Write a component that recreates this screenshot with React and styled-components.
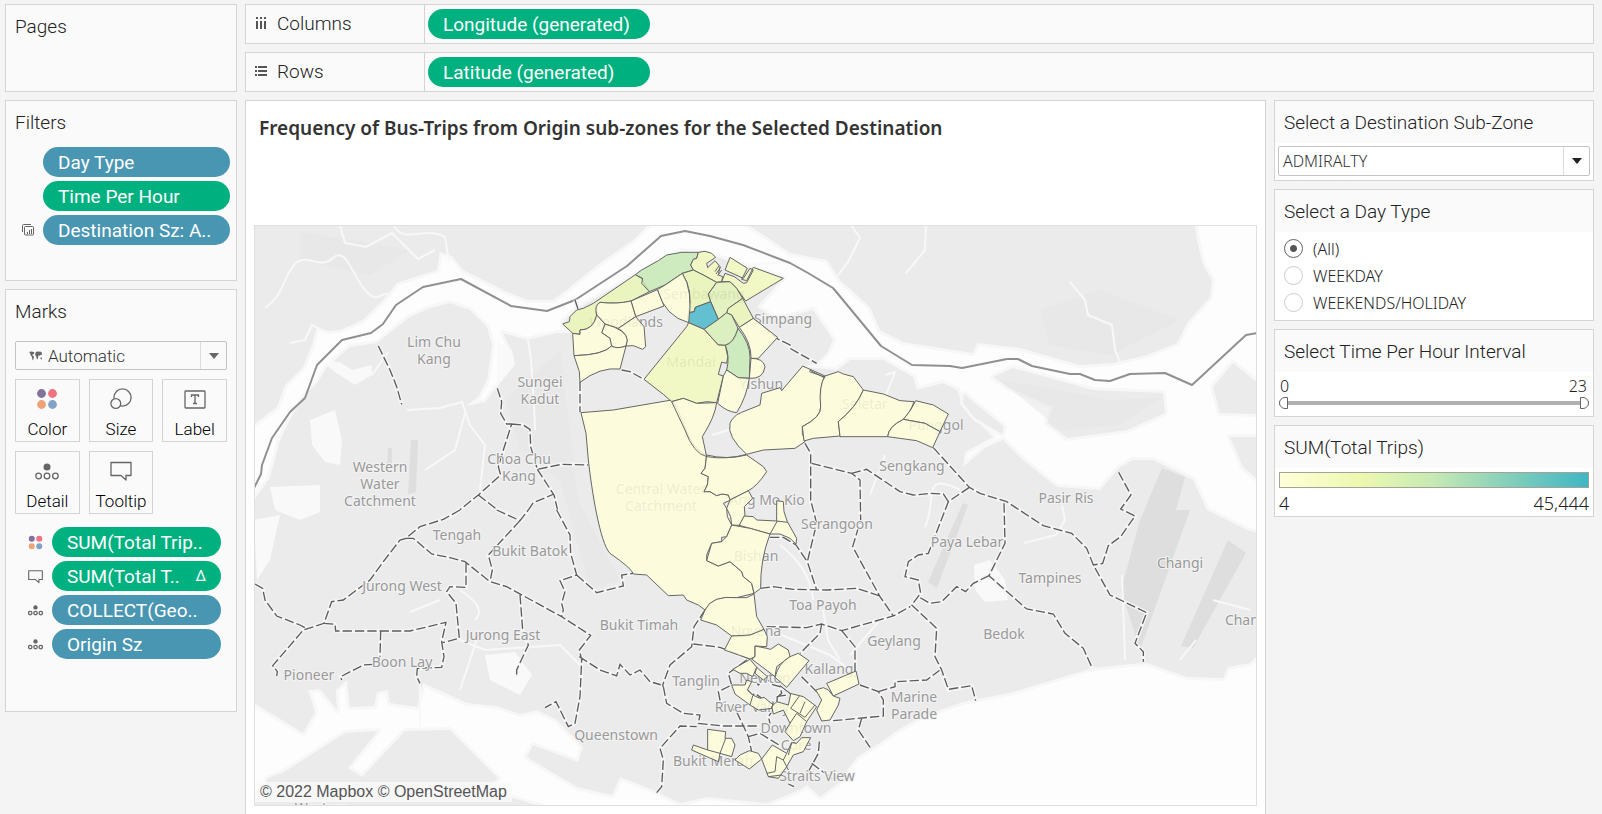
import React, { useState } from "react";
import styled, { createGlobalStyle } from "styled-components";

const GREEN = "#00b180";
const BLUE = "#4996b2";
const LINE = "#d4d4d4";

const GlobalStyle = createGlobalStyle`
  *, *::before, *::after { box-sizing: border-box; }
  body {
    margin: 0;
    background: #f4f4f4;
    color: #333;
    font-family: Roboto, "Liberation Sans", sans-serif;
  }
`;

/* ---------- page frame ---------- */

const Page = styled.div`
  display: grid;
  grid-template-columns: 232px minmax(0, 1fr);
  gap: 8px;
  min-height: 100vh;
  padding: 4px 8px 0 5px;
`;

const SideColumn = styled.aside`
  display: flex;
  flex-direction: column;
  gap: 8px;
`;

const MainColumn = styled.main`
  display: flex;
  flex-direction: column;
  gap: 8px;
  min-width: 0;
`;

const Workspace = styled.div`
  flex: 1;
  display: grid;
  grid-template-columns: minmax(0, 1fr) 320px;
  gap: 8px;
`;

const Card = styled.section`
  background: #fafafa;
  border: 1px solid ${LINE};
  min-height: ${(p) => p.$min || 0}px;
`;

const CardTitle = styled.h2`
  display: block;
  margin: 0;
  padding: 10px 9px 8px;
  font-size: 19px;
  line-height: 24px;
  font-weight: 300;
  color: #222;
`;

/* ---------- shelves and pills ---------- */

const Shelf = styled.section`
  display: flex;
  height: 40px;
  border: 1px solid ${LINE};
  background: #fafafa;
`;

const ShelfName = styled.h2`
  display: flex;
  align-items: center;
  gap: 9px;
  width: 179px;
  margin: 0;
  padding-left: 9px;
  border-right: 1px solid ${LINE};
  font-size: 19px;
  line-height: 24px;
  font-weight: 300;
  color: #222;
`;

const ShelfBody = styled.div`
  flex: 1;
  display: flex;
  align-items: center;
  padding-left: 3px;
`;

const PillButton = styled.button`
  display: flex;
  align-items: center;
  justify-content: space-between;
  width: ${(p) => p.$width}px;
  height: 30px;
  padding: 1px 15px 0;
  border: 0;
  border-radius: 15px;
  background: ${(p) => p.$color};
  color: #fff;
  font: 400 19px/29px Roboto, "Liberation Sans", sans-serif;
  text-align: left;
  white-space: nowrap;
`;

const Delta = styled.span`
  font-size: 15px;
`;

const PillList = styled.ul`
  display: flex;
  flex-direction: column;
  gap: 4px;
  margin: 0;
  padding: ${(p) => p.$pad};
  list-style: none;
`;

const PillRow = styled.li`
  display: flex;
  align-items: center;
  justify-content: flex-end;
  gap: ${(p) => p.$gap}px;
`;

/* ---------- marks ---------- */

const SelectBox = styled.div`
  position: relative;
  height: ${(p) => p.$height}px;
  margin: ${(p) => p.$margin};
`;

const SelectControl = styled.select`
  appearance: none;
  display: block;
  width: 100%;
  height: 100%;
  padding: 0 30px 0 ${(p) => p.$indent}px;
  border: 1px solid #c4c4c4;
  border-radius: 2px;
  background: ${(p) => p.$bg};
  color: #333;
  font: ${(p) => p.$font};
`;

const SelectArrow = styled.span`
  position: absolute;
  inset: 1px 1px 1px auto;
  display: flex;
  align-items: center;
  justify-content: center;
  width: 26px;
  border-left: 1px solid #ddd;
  pointer-events: none;

  &::after {
    content: "";
    border: 5px solid transparent;
    border-top: 6px solid ${(p) => p.$color};
    border-bottom: 0;
  }
`;

const SelectGlyph = styled.span`
  position: absolute;
  inset: 0 auto 0 14px;
  display: flex;
  align-items: center;
  pointer-events: none;
`;

const MarkGrid = styled.div`
  display: grid;
  grid-template-columns: repeat(3, 1fr);
  gap: 9px;
  padding: 0 9px;
`;

const MarkButton = styled.button`
  display: flex;
  flex-direction: column;
  align-items: center;
  gap: 9px;
  height: 63px;
  padding: 8px 0 0;
  border: 1px solid ${LINE};
  background: #fafafa;
  color: #000;
  font: 300 17px/20px Roboto, "Liberation Sans", sans-serif;
`;

/* ---------- view ---------- */

const View = styled.section`
  display: flex;
  flex-direction: column;
  padding: 0 8px 8px;
  border: 1px solid ${LINE};
  border-bottom: 0;
  background: #fff;
`;

const ViewTitle = styled.h1`
  height: 124px;
  margin: 0;
  padding: 14px 5px 0;
  font: 600 19px/26px "Noto Sans", sans-serif;
  color: #333;
  white-space: nowrap;
`;

const MapFrame = styled.div`
  position: relative;
  flex: 1;
  display: flex;
  min-height: 400px;
  border: 1px solid #e0e0e0;
  background: #fdfdfd;
`;

const MapSvg = styled.svg`
  flex: 1 1 0;
  width: 100%;
  min-width: 0;
  height: auto;
`;

const MapText = styled.text`
  font: 400 14px "Noto Sans", sans-serif;
  fill: #999;
  stroke: #f3f3f3;
  stroke-width: 2px;
  paint-order: stroke;
  text-anchor: middle;
`;

const Attribution = styled.p`
  position: absolute;
  left: 0;
  bottom: 3px;
  margin: 0;
  padding: 0 5px;
  background: rgba(250, 250, 250, 0.8);
  color: #555;
  font: 400 16px/20px "Liberation Sans", sans-serif;
`;

/* ---------- right column ---------- */

const ControlColumn = styled.aside`
  display: flex;
  flex-direction: column;
  gap: 8px;
`;

const ControlBody = styled.div`
  padding: ${(p) => p.$pad};
  background: #fff;
`;

const RadioGroup = styled.div`
  display: flex;
  flex-direction: column;
`;

const RadioLabel = styled.label`
  display: flex;
  align-items: center;
  gap: 10px;
  height: 27px;
  padding-left: 9px;
  font: 300 16px/20px "Noto Sans", sans-serif;
  color: #222;
`;

const Radio = styled.input`
  appearance: none;
  width: 19px;
  height: 19px;
  margin: 0;
  border: 1px solid #ccc;
  border-radius: 50%;
  background: #fff;

  &:checked {
    border-color: #666;
    background: radial-gradient(circle, #555 0 3px, #fff 4px);
  }
`;

const Ends = styled.div`
  display: flex;
  justify-content: space-between;
  padding: ${(p) => p.$pad};
  font: 300 ${(p) => p.$size}px/20px "Noto Sans", sans-serif;
  color: #222;
`;

const RangeTrack = styled.div`
  display: grid;
  align-items: center;
  height: 12px;
  background: linear-gradient(#b0b0b0, #b0b0b0) center / 100% 4px no-repeat;
`;

const RangeInput = styled.input`
  appearance: none;
  grid-area: 1 / 1;
  width: 100%;
  height: 12px;
  margin: 0;
  background: transparent;
  pointer-events: none;

  &::-webkit-slider-thumb {
    appearance: none;
    width: 9px;
    height: 12px;
    border: 1px solid #666;
    border-radius: ${(p) => (p.$end ? "0 6px 6px 0" : "6px 0 0 6px")};
    background: #fff;
    pointer-events: auto;
  }
`;

const Ramp = styled.div`
  height: 16px;
  border: 1px solid #a3a396;
  background: linear-gradient(90deg, #ffffd9, #edf8b1 26%, #c7e9b4 50%, #7fcdbb 76%, #41b6c4);
`;

/* ---------- icons ---------- */

const ColumnsIcon = () => (
  <svg width="13" height="14" viewBox="0 0 13 14" fill="#555" aria-hidden="true">
    {[1, 5, 9].map((x) => (
      <g key={x}>
        <rect x={x} y="0" width="2" height="2" />
        <rect x={x} y="4" width="2" height="8" />
      </g>
    ))}
  </svg>
);

const RowsIcon = () => (
  <svg width="13" height="14" viewBox="0 0 13 14" fill="#555" aria-hidden="true">
    {[1, 5, 9].map((y) => (
      <g key={y}>
        <rect x="0" y={y} width="2" height="2" />
        <rect x="3" y={y} width="9" height="2" />
      </g>
    ))}
  </svg>
);

const ContextIcon = () => (
  <svg width="12" height="12" viewBox="0 0 12 12" fill="none" stroke="#666" aria-hidden="true">
    <path d="M.5 8V1.5Q.5.5 1.500.5H9" />
    <rect x="2.500" y="2.500" width="9" height="8.500" rx="1" />
    <path d="M5.500 10V8M7.500 10V6M9.500 10V5" />
  </svg>
);

const ColorIcon = ({ size = 22 }) => (
  <svg width={size} height={size} viewBox="0 0 22 22" aria-hidden="true">
    <circle cx="5.500" cy="5.500" r="4.400" fill="#83709b" />
    <circle cx="16.500" cy="5.500" r="4.400" fill="#f2717f" />
    <circle cx="5.500" cy="16.500" r="4.400" fill="#eda376" />
    <circle cx="16.500" cy="16.500" r="4.400" fill="#82a2c8" />
  </svg>
);

const SizeIcon = () => (
  <svg width="22" height="22" viewBox="0 0 22 22" fill="none" stroke="#666" strokeWidth="1.300" aria-hidden="true">
    <circle cx="12.500" cy="9.500" r="8.600" />
    <circle cx="5.800" cy="15.500" r="4.900" fill="#fafafa" />
  </svg>
);

const LabelIcon = () => (
  <svg width="22" height="22" viewBox="0 0 22 22" fill="none" stroke="#666" strokeWidth="1.300" aria-hidden="true">
    <rect x="1" y="3" width="20" height="17" rx=".8" />
    <path d="M7.500 9V7H14.500V9M11 7V15.500M9 15.500H13" />
  </svg>
);

const DetailIcon = ({ width = 24, line = 1.3 }) => (
  <svg width={width} height={(width * 22) / 24} viewBox="0 0 24 22" fill="none" stroke="#666" strokeWidth={line} aria-hidden="true">
    <circle cx="12" cy="7" r="3.500" fill="#666" stroke="none" />
    <circle cx="3.600" cy="16" r="2.800" />
    <circle cx="12" cy="16" r="2.800" />
    <circle cx="20.400" cy="16" r="2.800" />
  </svg>
);

const TooltipIcon = ({ size = 22, line = 1.3 }) => (
  <svg width={size} height={size} viewBox="0 0 22 22" fill="none" stroke="#666" strokeWidth={line} strokeLinejoin="round" aria-hidden="true">
    <path d="M1 2.500H21V15.500H16V20L11 15.500H1Z" />
  </svg>
);

const WorldIcon = () => (
  <svg width="14" height="10" viewBox="0 0 14 10" fill="#666" aria-hidden="true">
    <path d="M0 1L2 .5 5 1 5.500 2 4 3.500 3 4 5 5.500 4.500 8 3.500 9.500 3 6 1.500 4 1 2ZM6.500 1.500L8 .5 12 .8 13 2 12.500 4.500 11.500 3.800 10.500 5 9.500 4 9 7.500 8 8.500 7 5 6 4 6.500 2.500ZM11.500 6.500L13 6.800 13 8.500 11.500 8Z" />
  </svg>
);

/* ---------- map data ---------- */

const BORDER =
  "M254 488L261 474 262 465 272 438 290 412 305 398 317 365 342 340 371 333 383 324 396 305 423 287 461 279 511 306 547 311 575 300 627 266 661 236 685 231 710 236 743 245 790 263 808 273 833 288 843 300 881 346 912 365 950 366 962 368 1007 359 1018 359 1032 366 1070 374 1080 374 1095 380 1110 381 1130 374 1165 373 1192 385 1246 335 1258 333";

const LAND = [
  "M254 225V424L277 407 285 385 303 367 312 345 317 327 328 331 340 330 363 320 383 300 397 283 415 277 437 270 440 252 452 256 463 270 503 290 527 300 553 300 570 287 600 263 633 240 648 225Z",
  "M748 225L767 237 790 253 827 260 840 280 870 307 880 330 903 342 973 353 977 343 1020 348 1080 365 1113 363 1147 355 1177 343 1187 323 1210 297 1212 280 1203 265 1197 240 1195 225Z",
  "M254 500L270 478 280 440 290 420 305 395 317 383 327 367 350 347 377 343 393 330 410 317 430 308 450 303 470 310 487 327 492 345 490 360 487 380 478 397 466 406 485 402 497 387 513 367 514 357 503 333 527 340 557 333 570 333 563 322 575 310 635 275 680 251 705 253 783 278 757 307 775 318 795 315 813 310 833 340 827 353 817 363 803 367 837 370 850 360 883 360 913 377 917 390 943 383 957 390 963 407 993 437 965 452 963 467 985 448 1003 440 1023 460 1057 487 1100 490 1120 467 1133 460 1153 460 1180 473 1193 480 1207 510 1247 530 1258 533V655L1250 663 1228 667 1223 678 1187 677 1147 663 1130 664 1093 668 1053 680 1013 692 963 702 920 717 895 732 880 743 857 757 847 770 848 776 820 797 807 785 800 790 767 803 707 797 680 803 653 790 625 779 620 777 612 795 577 787 545 768 527 757 533 745 578 762 583 747 557 720 537 710 520 714 497 706 467 703 423 683 417 707 390 703 388 690 377 692 374 706 350 707 347 680 336 690 337 710 320 689 308 690 315 712 303 733 254 703Z",
  "M254 806L268 778 284 772 345 733 378 731 348 768 362 777 405 731 450 730 498 778 485 790 540 806Z",
  "M993 377L1013 368 1093 390 1163 393 1165 413 1127 430 1067 438 1047 423 1053 407 1007 387Z",
  "M1233 363L1213 387 1220 413 1258 414V383Z",
  "M1230 437L1243 467 1258 480V437Z",
  "M964 394L1004 427 1002 434 975 418 963 403Z",
];

const SHADE = [
  "M505 400L560 350 578 500 620 580 590 590 560 480 520 450Z",
  "M1000 380L1060 390 1110 400 1160 398 1120 425 1060 430Z",
  "M1040 310L1100 290 1180 320 1110 355 1050 345Z",
  "M300 232L410 250 370 275 300 260Z",
];

const RUNWAYS = [
  "M1162 468L1185 477 1176 510 1190 510 1140 650 1121 590 1140 520Z",
  "M1228 540L1246 553 1193 648 1181 646Z",
  "M963 503L968 505 937 588 928 582Z",
  "M388 448L392 448 392 468 387 468Z",
  "M411 440L418 440 416 492 408 494Z",
];

const PONDS = [
  "M322 361L340 362 352 370 372 365 372 375 355 385 335 372Z",
  "M310 420L335 410 342 440 340 465 325 462 312 445Z",
  "M270 487L320 485 320 512 300 520 275 510Z",
  "M974 565L990 560 1005 580 1008 600 985 602 975 590Z",
  "M485 655L515 652 532 675 520 695 490 680Z",
  "M254 520L280 515 270 560 257 580Z",
  "M497 342L512 350 515 365 497 385Z",
];

const RIVERS = [
  "M265 308C285 295 285 270 297 262S320 270 333 258 352 275 365 290 380 292 388 294M340 226L345 243 366 247 392 233 418 259 435 250M394 226C405 245 425 225 445 237L449 262",
  "M290 343L305 340 312 325 325 332M372 375L388 352M407 410L440 408 462 402 470 425 485 445 480 490M466 410L455 450 425 470M528 340L531 360 534 405 535 430",
  "M851 225L860 238 848 262 838 275M906 273L925 250 926 225M1070 282L1085 300 1088 315 1112 325 1115 350 1120 362M885 375L895 372 884 400M885 455L870 495M960 490C920 470 938 500 925 527",
  "M745 265L790 262M712 435L735 428M780 545C800 560 812 580 813 600M823 610L828 640 840 660M777 633L830 655 850 670M480 630L470 660 460 690M460 590C475 600 485 610 475 620M410 612L440 600M460 640L485 650 560 645 580 665M880 620L850 655",
  "M1122 575L1125 660M1213 600L1250 610M1180 660L1196 640M420 683V727M1024 543L1056 535 1065 520 1062 505",
];

/* Each sheet holds outlines drawn at three units to the pixel from its origin. */
const SHEETS = [
  {
    x: 250, y: 220,
    dashes: "M385 378L420 450 440 500 455 553M742 505L755 545 752 580 770 612 785 612 760 690 745 740 752 765 685 825 610 885 570 900M785 612L820 615 840 628 842 680 862 748 935 733 1015 735M862 748L912 825 930 900M685 825L740 868 815 900 850 848 912 822M990 485V577",
    zones: [],
  },
  {
    x: 250, y: 510,
    dashes: "M630 0L580 28 510 50 468 85 450 90 400 155 360 210 320 240 280 270 245 275 222 340 160 360 68 467 82 485 80 498M15 222L38 235 45 270 80 318 150 345 168 355M222 340L255 343 257 363 480 363 588 337 575 395 582 440 575 472 502 475 500 500 510 520M392 363L390 440M370 463L340 465 272 500 275 510M468 85L490 85 545 132 600 143 645 155 720 215 770 230 935 320 1022 376 988 420 995 450 990 560 975 640 955 650 918 575 885 593M648 160V232L600 230 590 245 618 280 628 385 578 398M740 0L810 32 835 0M810 32L715 135 727 180 720 215M920 0L960 75 962 130 980 195 930 212 945 245 935 280 940 300 935 320M980 195L1040 248 1120 228 1115 195 1150 190M810 255L818 360 835 405 800 480 800 500M988 440L1050 480 1100 498 1110 463 1140 495 1170 480 1200 515 1235 525",
    zones: [],
  },
  {
    x: 560, y: 400,
    dashes: "M435 630L402 680 395 740 330 795 308 855 320 900 322 910M400 732L480 742 570 777M735 130L752 160 752 300 770 370 742 485 770 570M755 190L875 220 900 240 902 360 878 440 905 490 960 590 1000 648M875 220L920 208 1020 275 1060 285 1140 282M630 412L670 412 708 435 742 485M602 565L640 560 700 568 800 570 890 565 960 588M620 680L740 683 785 672 845 692 1000 648 1050 620 1075 590M785 672L780 700 720 760M845 692L885 740 885 830",
    zones: [
      ["light", "M63 38L160 30 335 0 340 8C375 60 380 140 440 165L435 205 423 220 445 230 442 255 432 275 450 275 470 287 485 282 505 285 512 300 490 310 500 325 502 350 515 375 500 410 485 412 485 425 455 430 440 465 440 482 475 498 510 485 545 515 550 530 575 550 582 580 530 593Q460 585 435 630L415 615 380 600 370 585 325 587 260 525 220 522Q215 505 150 460C120 430 95 270 85 180L78 100Z"],
      ["light", "M440 165Q500 180 560 165L610 200 620 215Q590 260 565 272L510 300 505 285 485 282 470 287 450 275 432 275 442 255 445 230 423 220 435 205Z"],
      ["light", "M510 300L565 272 578 295 553 320 555 348 538 376 515 375 512 350 500 325Z"],
      ["light", "M538 376L552 348 580 350 590 360 650 363 650 302 670 305 672 335 682 365 710 415 708 432 690 415 660 402 630 402Z"],
      ["none", "M650 363L684 367M652 363L630 402"],
      ["light", "M515 375Q570 382 630 402Q600 480 602 565L582 580 575 550 550 530 545 515 510 485 475 498 440 482 455 430 485 425 500 410Z"],
      ["light", "M435 630Q455 585 530 593L560 593 582 582 590 650 612 688Q590 700 570 705L550 710 515 708 470 675 422 660Z"],
      ["light", "M515 708L570 705 612 688 622 710 620 740 585 738 585 770 570 777 493 750Z"],
      ["light", "M585 738L620 745 632 748 655 732 685 750 690 770 650 800 645 830 575 777 585 770Z"],
      ["light", "M690 770L715 760 747 782 680 862 645 832Q655 790 690 770Z"],
    ],
  },
  {
    x: 550, y: 220,
    dashes: "M610 295L683 357 720 375 720 385 800 430M215 450L240 455 282 478M75 240L85 270",
    zones: [
      ["pale", "M38 312L58 305 60 290 80 270 100 265 130 250 256 164 275 175 298 215 243 243Q200 253 150 247Q135 265 140 290Q130 330 90 330L90 343 68 340 60 332Z"],
      ["mint", "M256 164L275 150 325 122 350 105 395 97 445 97 440 115 430 118 422 135 430 150 397 160 345 195 298 215 275 190 278 175Z"],
      ["pale2", "M445 97L465 94 485 100 497 112 470 130 473 143 495 122 510 140 505 165 518 170 515 185 500 187 460 165 430 150 422 135 430 118 440 115Z"],
      ["pale2", "M540 112L592 145 575 178 590 182 610 142 700 175 587 243 560 205 540 185 515 185 525 160 553 170 580 190 590 188 610 150 600 145 580 175 525 150Z"],
      ["none", "M495 155L507 137M498 162L512 142M503 167L515 150"],
      ["pale", "M397 160L430 150 460 165 500 187 475 222 482 245 436 262 432 275 416 278Q430 210 397 160Z"],
      ["pale3", "M500 187L540 185 560 205 578 235 535 265 530 278 505 298 482 245 475 222Z"],
      ["pale", "M578 235L610 295 568 322 545 285 530 278 535 265Z"],
      ["blue", "M436 262L482 245 505 298 462 328 416 308 413 295 416 278 433 275Z"],
      ["pale4", "M530 278L545 285 564 325Q560 365 525 376L505 375 462 328 505 298Z"],
      ["mint", "M564 325Q600 370 600 410L598 475 565 473 530 450Q540 410 526 376Q550 370 564 325Z"],
      ["light", "M610 295L683 352 625 415 603 415Q605 370 568 322Z"],
      ["light", "M603 415Q640 415 645 440Q640 478 598 475Z"],
      ["light", "M322 209L345 195 397 160Q430 210 416 308Q345 290 322 209Z"],
      ["light", "M243 243L322 209 342 258 257 290Z"],
      ["light", "M140 285Q132 255 150 247Q200 253 243 243L257 290 205 325 165 312Z"],
      ["light", "M257 290L282 320 287 380 278 388 250 377 228 378Q240 345 205 325Z"],
      ["light", "M165 312Q230 330 232 360L228 378Q195 390 183 375L180 355 155 338Z"],
      ["light", "M68 340L90 343 90 330Q130 330 140 285L165 312 155 338 180 355 185 378Q160 405 72 407Z"],
      ["light", "M72 407Q160 405 185 378Q200 388 228 378L210 447Q150 440 90 487L88 455Z"],
      ["pale2", "M410 320L416 308 462 328 505 375 526 376 533 410 530 430 515 426 505 463 520 468 500 548 470 545 440 550 400 535 365 545 340 523 282 478Z"],
      ["light", "M530 450L565 473 598 475Q590 530 560 578Q530 575 503 550L520 468Z"],
      ["light", "M365 545L400 535 440 550 500 548Q495 590 457 650L470 710Q430 700 405 630Z"],
      ["light", "M545 600Q560 580 575 577L630 555 635 520 690 503 695 512 758 438 825 468Q810 490 812 560Q815 590 757 620L757 640 765 665 735 685 640 690 590 703Q530 650 540 610Z"],
      ["light", "M825 468L865 455 880 462 910 470 940 510Q920 560 865 605L870 648 790 655 762 663 757 620Q815 590 812 560Q805 500 825 468Z"],
      ["light", "M940 510L1000 522 1050 542 1092 545Q1080 580 1060 598Q1015 620 1013 650L870 650 865 605Q920 560 940 510Z"],
      ["light", "M1097 542L1150 555 1195 582 1170 635 1125 610 1060 598Q1085 570 1097 542Z"],
      ["light", "M1060 598L1125 610 1170 635 1148 683 1100 662 1013 650Q1015 620 1060 598Z"],
      ["none", "M470 710Q530 720 590 703M778 450L825 474M778 455L822 470"],
    ],
  },
  {
    x: 640, y: 590,
    dashes: "M70 290L80 340 130 370 180 375 175 400 250 408 360 408M50 608L65 590 70 510 60 475 120 408 170 410M485 260L540 315M660 285L715 305 730 330 730 378 570 393M715 305L765 290 765 275 860 270 900 240 925 300 995 288 1008 330M665 385L655 420 690 472M290 365L325 440 335 485M325 440L360 430 425 470M538 455L535 490 505 545M515 520L575 565M445 582L462 590M320 210L265 250 275 285 235 305 240 330 290 365M412 320L410 345 385 380 390 400M410 320L440 315M320 270L340 260 355 285 375 262 400 285 420 290 425 310 412 322M322 300L338 315 345 310 365 325",
    zones: [
      ["light", "M330 208L350 232 338 260 320 250 300 250 278 238Z"],
      ["light", "M350 232L382 260 370 270 345 250Z"],
      ["light", "M275 285L315 285 320 270 335 275 322 300 338 315 360 325 372 322 400 345 395 355 355 360 330 345 285 312Z"],
      ["light", "M560 280L648 243 657 282 580 318Z"],
      ["light", "M527 300L550 293 565 300 580 318 600 325 595 345 570 390 545 393 530 360 545 330Z"],
      ["light", "M420 287L450 310 490 320 530 350 500 395 480 440 460 452 435 425 450 400 430 360 400 372 395 350 410 335 445 345 452 312Z"],
      ["none", "M478 318L452 355 495 382 525 345M495 335L480 370M450 400L470 370 500 395M330 345L338 318M395 355L400 338"],
      ["light", "M203 418L257 425 255 445 275 445 285 465 275 500 240 490 235 515 155 480 160 465 203 480Z"],
      ["none", "M257 445L240 490 203 480"],
      ["light", "M285 510L300 495 328 482 355 490 365 507 328 537Z"],
      ["light", "M365 507L397 465 440 490 455 458 470 460 485 443 512 443 490 485 460 495 440 530 415 565 385 560Z"],
      ["none", "M440 490L430 510 410 500 405 545 380 550M430 510L445 540M385 560L425 555M455 458L445 495"],
    ],
  },
  {
    x: 880, y: 280,
    dashes: "M160 503L268 622 300 640 380 665 490 737 575 760 620 805 640 855 690 945 800 998 765 1090 790 1115 790 1145M716 577L753 645 722 687 765 708 722 770 685 797 668 850 640 855M268 622L205 665 145 820 115 825 85 845 75 890 115 900 122 940 95 975 170 1045 165 1130 185 1170 205 1228 275 1217 287 1262M205 665L190 642 150 640 105 645M372 670L375 790 327 887 440 987 520 1002 555 1060 610 1105 637 1165M327 887L280 910 257 935 230 920 185 965 150 970 115 950",
    zones: [],
  },
];

const FILLS = {
  light: "#ffffd9",
  pale: "#e9f5b4",
  pale2: "#f2fabc",
  pale3: "#e2f2b6",
  pale4: "#d8efb6",
  mint: "#c7e9b4",
  blue: "#43b6cb",
  none: "none",
};

const PLACES = [
  [434, 347, "Lim Chu", "Kang"],
  [380, 472, "Western", "Water", "Catchment"],
  [540, 387, "Sungei", "Kadut"],
  [519, 464, "Choa Chu", "Kang"],
  [457, 540, "Tengah"],
  [530, 556, "Bukit Batok"],
  [402, 591, "Jurong West"],
  [503, 640, "Jurong East"],
  [402, 667, "Boon Lay"],
  [309, 680, "Pioneer"],
  [639, 630, "Bukit Timah"],
  [616, 740, "Queenstown"],
  [696, 686, "Tanglin"],
  [661, 494, "Central Water", "Catchment"],
  [767, 505, "Ang Mo Kio"],
  [837, 529, "Serangoon"],
  [756, 561, "Bishan"],
  [823, 610, "Toa Payoh"],
  [756, 636, "Novena"],
  [894, 646, "Geylang"],
  [765, 683, "Newton"],
  [829, 674, "Kallang"],
  [752, 712, "River Valley"],
  [796, 733, "Downtown", "Core"],
  [713, 766, "Bukit Merah"],
  [817, 781, "Straits View"],
  [914, 702, "Marine", "Parade"],
  [912, 471, "Sengkang"],
  [936, 430, "Punggol"],
  [865, 409, "Seletar"],
  [691, 367, "Mandai"],
  [626, 327, "Woodlands"],
  [704, 299, "Sembawang"],
  [783, 324, "Simpang"],
  [761, 389, "Yishun"],
  [1066, 503, "Pasir Ris"],
  [967, 547, "Paya Lebar"],
  [1050, 583, "Tampines"],
  [1180, 568, "Changi"],
  [1004, 639, "Bedok"],
  [1248, 625, "Changi"],
  [322, 813, "Western"],
];

function SingaporeMap() {
  return (
    <MapSvg viewBox="255 226 1001 579" preserveAspectRatio="xMidYMid slice" role="img" aria-label="Map of bus trips by origin sub-zone">
      <g fill="#ebebeb" stroke="#f7f7f7" strokeWidth="6" strokeLinejoin="round" paintOrder="stroke">
        {LAND.map((d) => <path key={d} d={d} />)}
      </g>
      <g fill="#e6e6e6" opacity=".5">{SHADE.map((d) => <path key={d} d={d} />)}</g>
      <g fill="#dedede">{RUNWAYS.map((d) => <path key={d} d={d} />)}</g>
      <g fill="#f9f9f9">{PONDS.map((d) => <path key={d} d={d} />)}</g>
      <g fill="none" stroke="#f8f8f8" strokeWidth="2">{RIVERS.map((d) => <path key={d} d={d} />)}</g>
      <path d={BORDER} fill="none" stroke="#909090" strokeWidth="2" strokeLinejoin="round" />
      {SHEETS.map((s) => (
        <g key={`${s.x}-${s.y}`} transform={`translate(${s.x} ${s.y}) scale(${1 / 3})`} fill="none">
          <path d={s.dashes} stroke="#f5f5f5" strokeWidth="12" strokeLinejoin="round" />
          <path d={s.dashes} stroke="#5c5c5c" strokeWidth="4" strokeDasharray="28 9" />
        </g>
      ))}
      {PLACES.map(([x, y, ...lines]) => (
        <MapText key={`${x}-${y}`} x={x} y={y}>
          {lines.map((line, i) => (
            <tspan key={line} x={x} dy={i ? 17 : 0}>{line}</tspan>
          ))}
        </MapText>
      ))}
      {SHEETS.map((s) => (
        <g key={`${s.x}-${s.y}`} transform={`translate(${s.x} ${s.y}) scale(${1 / 3})`} stroke="#666" strokeWidth="3" strokeLinejoin="round">
          {s.zones.map(([tone, d]) => (
            <path key={d} d={d} fill={FILLS[tone]} fillOpacity=".82" />
          ))}
        </g>
      ))}
    </MapSvg>
  );
}

/* ---------- page ---------- */

const MARKS = [
  ["Color", <ColorIcon key="i" />],
  ["Size", <SizeIcon key="i" />],
  ["Label", <LabelIcon key="i" />],
  ["Detail", <DetailIcon key="i" />],
  ["Tooltip", <TooltipIcon key="i" />],
];

const ENCODINGS = [
  ["SUM(Total Trip..", GREEN, <ColorIcon key="i" size={15} />],
  ["SUM(Total T..", GREEN, <TooltipIcon key="i" size={15} line={1.6} />, true],
  ["COLLECT(Geo..", BLUE, <DetailIcon key="i" width={15} line={2} />],
  ["Origin Sz", BLUE, <DetailIcon key="i" width={15} line={2} />],
];

export default function App() {
  const [day, setDay] = useState("(All)");
  return (
    <>
      <GlobalStyle />
      <Page>
        <SideColumn>
          <Card $min={88}>
            <CardTitle>Pages</CardTitle>
          </Card>
          <Card $min={181}>
            <CardTitle>Filters</CardTitle>
            <PillList $pad="4px 6px 0 0">
              <PillRow><PillButton $width={187} $color={BLUE}>Day Type</PillButton></PillRow>
              <PillRow><PillButton $width={187} $color={GREEN}>Time Per Hour</PillButton></PillRow>
              <PillRow $gap={9}>
                <ContextIcon />
                <PillButton $width={187} $color={BLUE}>Destination Sz: A..</PillButton>
              </PillRow>
            </PillList>
          </Card>
          <Card $min={423}>
            <CardTitle>Marks</CardTitle>
            <SelectBox $height={29} $margin="9px 9px">
              <SelectControl
                $indent={32}
                $bg="#fafafa"
                $font="300 17px/24px Roboto, sans-serif"
                aria-label="Mark type"
              >
                <option>Automatic</option>
              </SelectControl>
              <SelectGlyph><WorldIcon /></SelectGlyph>
              <SelectArrow $color="#666" />
            </SelectBox>
            <MarkGrid>
              {MARKS.map(([name, icon]) => (
                <MarkButton key={name} type="button">{icon}{name}</MarkButton>
              ))}
            </MarkGrid>
            <PillList $pad="13px 15px 0 0">
              {ENCODINGS.map(([name, color, icon, delta]) => (
                <PillRow key={name} $gap={9}>
                  {icon}
                  <PillButton $width={169} $color={color}>
                    {name}
                    {delta && <Delta>Δ</Delta>}
                  </PillButton>
                </PillRow>
              ))}
            </PillList>
          </Card>
        </SideColumn>
        <MainColumn>
          <Shelf>
            <ShelfName><ColumnsIcon />Columns</ShelfName>
            <ShelfBody><PillButton $width={222} $color={GREEN}>Longitude (generated)</PillButton></ShelfBody>
          </Shelf>
          <Shelf>
            <ShelfName><RowsIcon />Rows</ShelfName>
            <ShelfBody><PillButton $width={222} $color={GREEN}>Latitude (generated)</PillButton></ShelfBody>
          </Shelf>
          <Workspace>
            <View>
              <ViewTitle>Frequency of Bus-Trips from Origin sub-zones for the Selected Destination</ViewTitle>
              <MapFrame>
                <SingaporeMap />
                <Attribution>© 2022 Mapbox © OpenStreetMap</Attribution>
              </MapFrame>
            </View>
            <ControlColumn>
              <Card>
                <CardTitle as="label" htmlFor="subzone">Select a Destination Sub-Zone</CardTitle>
                <ControlBody $pad="3px 3px 4px">
                  <SelectBox $height={30} $margin="0">
                    <SelectControl
                      id="subzone"
                      $indent={4}
                      $bg="#fff"
                      $font={'300 16px/24px "Noto Sans", sans-serif'}
                    >
                      <option>ADMIRALTY</option>
                    </SelectControl>
                    <SelectArrow $color="#222" />
                  </SelectBox>
                </ControlBody>
              </Card>
              <Card>
                <CardTitle id="day-type">Select a Day Type</CardTitle>
                <ControlBody $pad="3px 0 4px">
                  <RadioGroup role="radiogroup" aria-labelledby="day-type">
                    {["(All)", "WEEKDAY", "WEEKENDS/HOLIDAY"].map((name) => (
                      <RadioLabel key={name}>
                        <Radio type="radio" name="day" checked={day === name} onChange={() => setDay(name)} />
                        {name}
                      </RadioLabel>
                    ))}
                  </RadioGroup>
                </ControlBody>
              </Card>
              <Card>
                <CardTitle>Select Time Per Hour Interval</CardTitle>
                <ControlBody $pad="3px 4px 7px">
                  <Ends $pad="1px 2px 1px 1px" $size={16}><span>0</span><span>23</span></Ends>
                  <RangeTrack>
                    <RangeInput type="range" min="0" max="23" defaultValue="0" aria-label="From hour" />
                    <RangeInput $end type="range" min="0" max="23" defaultValue="23" aria-label="To hour" />
                  </RangeTrack>
                </ControlBody>
              </Card>
              <Card>
                <CardTitle>SUM(Total Trips)</CardTitle>
                <ControlBody $pad="4px 4px 3px">
                  <Ramp />
                  <Ends $pad="5px 0 0" $size={18}><span>4</span><span>45,444</span></Ends>
                </ControlBody>
              </Card>
            </ControlColumn>
          </Workspace>
        </MainColumn>
      </Page>
    </>
  );
}
